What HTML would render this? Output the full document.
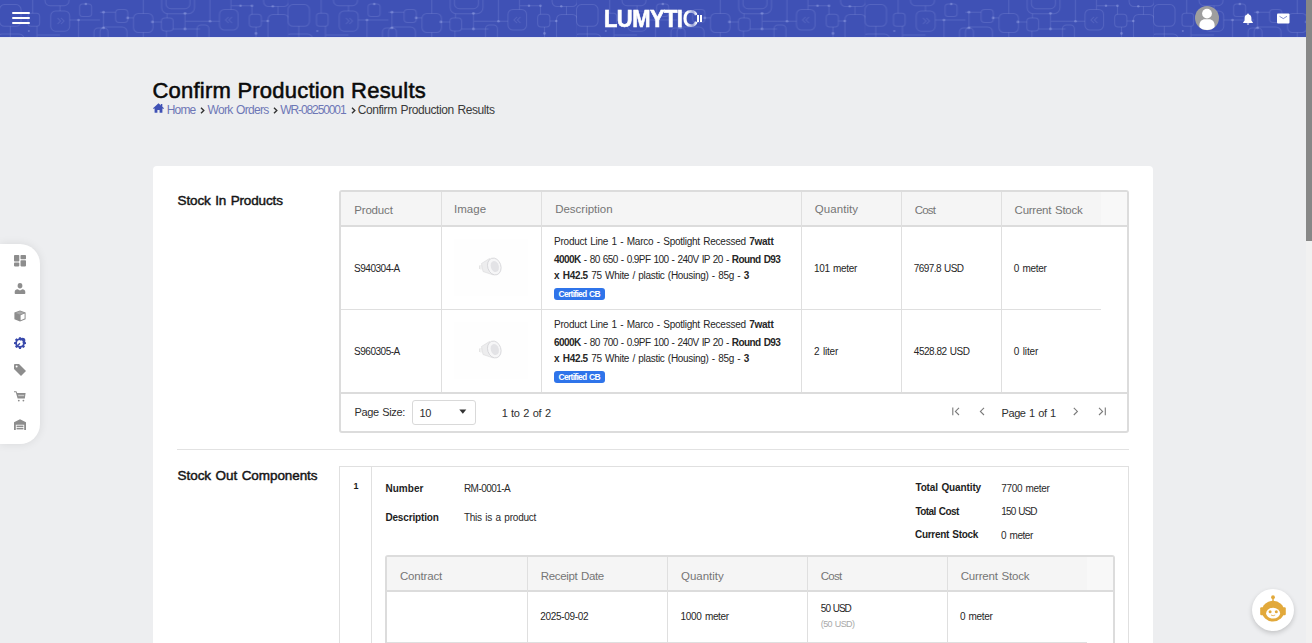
<!DOCTYPE html>
<html><head><meta charset="utf-8">
<style>
*{box-sizing:border-box;margin:0;padding:0}
html,body{width:1312px;height:643px;overflow:hidden}
body{background:#edeef0;font-family:"Liberation Sans",sans-serif;position:relative;color:#222}
.a{position:absolute;white-space:nowrap;line-height:1}
#hdr{position:absolute;left:0;top:0;width:1306px;height:37px;background:#3f51b5;overflow:hidden}
#hdrline{position:absolute;left:0;top:37px;width:1306px;height:1px;background:#e4e7f3}
#sb{position:absolute;left:1306px;top:0;width:6px;height:643px;background:#f1f1f1}
#sbt{position:absolute;left:1306px;top:0;width:6px;height:241px;background:#878787}
#side{position:absolute;left:0;top:244px;width:40px;height:200px;background:#fff;border-radius:0 20px 20px 0;box-shadow:0 0 10px rgba(0,0,0,.09)}
#card{position:absolute;left:153px;top:166px;width:1000px;height:500px;background:#fff;border-radius:4px}
.tbl{position:absolute;border:2px solid #dcdcdc;border-radius:3px;background:#fff}
.vl{position:absolute;width:1px;background:#dfdfdf}
.hl{position:absolute;height:1px;background:#dfdfdf}
.hd{color:#6e6e6e;font-size:12px}
.cell{color:#222;font-size:10px}
.bd{font-weight:bold}
.badge{position:absolute;background:#2f74ea;border-radius:3px;color:#fff;font-weight:bold;font-size:8.5px;line-height:12px;height:12px;padding:0 3px}
</style></head><body>
<div id="hdr"><svg width="1306" height="37" style="position:absolute;left:0;top:0">
<defs><pattern id="pt" patternUnits="userSpaceOnUse" width="288.5" height="37">
<g fill="none" stroke="rgba(200,210,255,0.15)" stroke-width="1">
<rect x="-0.5" y="4.6" width="21.5" height="21.7" rx="5"/>
<rect x="288" y="4.6" width="21.5" height="21.7" rx="5"/>
<rect x="28" y="13.3" width="11.6" height="13" rx="3"/>
<path d="M32.7 0V13.3"/>
<rect x="50.7" y="11" width="19" height="20.2" rx="5"/>
<rect x="45" y="-10" width="24" height="15.7" rx="5"/>
<rect x="79.6" y="4" width="12" height="12.5" rx="3"/>
<path d="M69.7 20H100M78.5 20V37M10.3 26.3V37M37 26.3V37M37 35H60M60 5.7V11"/>
<rect x="-3" y="34" width="27" height="10" rx="5"/>
<rect x="94" y="28" width="14" height="14" rx="4"/>
<path d="M100 12.2H115.6M103.5 12.2V27.9"/>
<rect x="115.6" y="9.5" width="12.2" height="13" rx="3.5"/>
<path d="M127.7 17.9H133.5"/>
<rect x="133.5" y="13.5" width="19.5" height="19.1" rx="5"/>
<path d="M143.3 0V13.5M143.3 32.6V37M153 21.9H161.4"/>
<rect x="161.4" y="17.9" width="11.8" height="13" rx="3.5"/>
<rect x="161.7" y="-12" width="32.8" height="25.7" rx="6"/>
<rect x="166" y="-12" width="24" height="20.7" rx="5"/>
<path d="M185 13.3V29M173 29H200M185 21.3H200M167 13.7V17.9M166.5 31V37"/>
<rect x="100" y="27" width="27" height="14" rx="5"/>
<rect x="197" y="25" width="12" height="16" rx="4"/>
<path d="M210 0V21.3M200 21.3H219.5"/>
<rect x="219.5" y="9.5" width="18.6" height="20.5" rx="5"/>
<path d="M231 0V9.5M231 5.8H252M252 5.8V14.3"/>
<rect x="249.2" y="14.3" width="12.2" height="12.7" rx="3.5"/>
<path d="M261.4 21H268"/>
<rect x="268" y="14.5" width="20.8" height="26" rx="5"/>
<rect x="263.6" y="-12" width="25.2" height="18.5" rx="5"/>
<path d="M256 27V37M278 6.5V14.5"/>
<path d="M57.5 18L60.5 21L57.5 24M61 18L64 21L61 24"/>
<path d="M232 17L229 20L232 23M228.5 17L225.5 20L228.5 23"/>
</g>
<g fill="rgba(200,210,255,0.3)">
<circle cx="85.8" cy="4" r="1.3"/><circle cx="78.5" cy="20" r="1.3"/><circle cx="28.8" cy="31" r="1"/>
<circle cx="103.5" cy="12.2" r="1.4"/><circle cx="103.5" cy="27.9" r="1.4"/><circle cx="127.7" cy="17.9" r="1.4"/>
<circle cx="152.4" cy="21.9" r="1.4"/><circle cx="185" cy="13.3" r="1.4"/><circle cx="185" cy="29" r="1.4"/>
<circle cx="210" cy="21.3" r="1.3"/><circle cx="240.5" cy="5.8" r="1.2"/><circle cx="252" cy="5.8" r="1.3"/>
<circle cx="267.8" cy="21" r="1.3"/><circle cx="272.8" cy="6.2" r="1.2"/><circle cx="256" cy="33.4" r="1.3"/>
</g>
</pattern></defs>
<rect width="1306" height="37" fill="url(#pt)"/>
</svg>
<div style="position:absolute;left:12px;top:11.6px;width:18px;height:2.3px;background:#fff;border-radius:1px"></div>
<div style="position:absolute;left:12px;top:16.9px;width:18px;height:2.3px;background:#fff;border-radius:1px"></div>
<div style="position:absolute;left:12px;top:22px;width:18px;height:2.3px;background:#fff;border-radius:1px"></div>
<div class="a" style="left:604px;top:8px;font-size:23.5px;font-weight:bold;color:#fff;letter-spacing:-0.6px;-webkit-text-stroke:0.6px #fff;transform-origin:0 0;transform:scaleX(0.935)">LUMYTI<span style="background:linear-gradient(90deg,#fff 30%,rgba(255,255,255,0.45) 70%,#fff 95%);-webkit-background-clip:text;color:transparent;-webkit-text-stroke:0">C</span></div>
<div style="position:absolute;left:697px;top:15px;width:1.5px;height:7px;background:#fff"></div><div style="position:absolute;left:700px;top:15px;width:1.5px;height:7px;background:#fff"></div>
<svg width="30" height="30" style="position:absolute;left:1192px;top:3px" viewBox="0 0 30 30">
<circle cx="15" cy="15" r="12" fill="#9e9e9e"/>
<circle cx="15" cy="10.6" r="4.9" fill="#fff"/>
<clipPath id="avc"><circle cx="15" cy="15" r="12"/></clipPath><path clip-path="url(#avc)" d="M7.4 30V22.5C7.4 18.5 10 16.3 13 16.3H17C20 16.3 22.6 18.5 22.6 22.5V30Z" fill="#fff"/>
</svg>
<svg width="12" height="12" style="position:absolute;left:1242px;top:12.5px" viewBox="0 0 12 12">
<path d="M6 0.6C6.6 0.6 6.9 1 6.9 1.4C8.6 1.8 9.4 3.2 9.4 5V7.6L10.8 9.3V10H1.2V9.3L2.6 7.6V5C2.6 3.2 3.4 1.8 5.1 1.4C5.1 1 5.4 0.6 6 0.6ZM4.8 10.6H7.2C7.2 11.3 6.7 11.7 6 11.7S4.8 11.3 4.8 10.6Z" fill="#fff"/>
</svg>
<svg width="13" height="11" style="position:absolute;left:1277px;top:12.5px" viewBox="0 0 13 11">
<rect x="0" y="0.5" width="12.5" height="10" rx="1" fill="#fff"/>
<path d="M2.5 3.3L6.25 5.6L10 3.3" fill="none" stroke="#3f51b5" stroke-width="0.8" opacity="0.8"/>
</svg>
</div>
<div id="hdrline"></div>

<div id="side">
<svg style="position:absolute;left:14px;top:11px" width="12" height="12" viewBox="0 0 12 12"><g fill="#8d8d8d"><rect x="0" y="0" width="5.3" height="6.6" rx="0.8"/><rect x="6.5" y="0" width="5.5" height="4.3" rx="0.8"/><rect x="0" y="7.6" width="5.3" height="3.8" rx="0.8"/><rect x="6.5" y="5.3" width="5.5" height="6.1" rx="0.8"/></g></svg>
<svg style="position:absolute;left:14px;top:39px" width="12" height="12" viewBox="0 0 12 12"><g fill="#8d8d8d"><path d="M3.7 2.3C3.7 0.9 4.7 0 6 0S8.3 0.9 8.3 2.3V3.2C8.3 4.6 7.3 5.4 6 5.4S3.7 4.6 3.7 3.2Z"/><path d="M0.7 9C0.7 7.4 2 6.3 3.6 6.3L6 7.6L8.4 6.3C10 6.3 11.3 7.4 11.3 9V10.2C11.3 10.6 11 11 10.6 11H1.4C1 11 0.7 10.6 0.7 10.2Z"/></g></svg>
<svg style="position:absolute;left:14px;top:66px" width="12" height="12" viewBox="0 0 12 12"><path d="M6 0.4L11.6 2.6V9.2L6 11.6L0.4 9.2V2.6Z" fill="#8d8d8d"/><path d="M6.6 5.2L10.6 3.6V8.6L6.6 10.3Z" fill="#fff"/><path d="M1.6 2.9L6 1.3L10.4 2.9L6 4.5Z" fill="#a9a9a9"/></svg>
<svg style="position:absolute;left:13.5px;top:93px" width="12" height="12" viewBox="0 0 12 12"><path d="M5 0.2H7L7.3 1.6L8.4 2.1L9.6 1.3L11 2.7L10.2 3.9L10.6 5L12 5.3V7L10.6 7.3L10.2 8.4L11 9.6L9.6 11L8.4 10.2L7.3 10.6L7 12H5L4.7 10.6L3.6 10.2L2.4 11L1 9.6L1.8 8.4L1.4 7.3L0 7V5.3L1.4 5L1.8 3.9L1 2.7L2.4 1.3L3.6 2.1L4.7 1.6Z" fill="#3949ab"/><circle cx="6" cy="6.1" r="3" fill="#fff"/><path d="M3.5 8.8L6 6.3M6.5 3.6A2.1 2.1 0 1 1 8.6 5.7" stroke="#3949ab" stroke-width="1.3" fill="none"/></svg>
<svg style="position:absolute;left:14px;top:120px" width="12" height="12" viewBox="0 0 12 12"><path d="M0 1.2C0 0.5 0.5 0 1.2 0H5L12 7L7 12L0 5Z" fill="#8d8d8d"/><circle cx="2.6" cy="2.6" r="1" fill="#fff"/></svg>
<svg style="position:absolute;left:14px;top:147px" width="12" height="11" viewBox="0 0 12 11"><g fill="#8d8d8d"><path d="M0 0.3H2.4L3.2 2H11.6L10.8 7.6H3.6L1.8 1.3H0Z"/><circle cx="4.8" cy="9.6" r="0.9"/><circle cx="9.4" cy="9.6" r="0.9"/></g><rect x="4.2" y="3.8" width="6" height="1.4" fill="#c8c8c8"/></svg>
<svg style="position:absolute;left:14px;top:175px" width="12" height="12" viewBox="0 0 12 12"><path d="M0 3.3L6 0.2L12 3.3V11H10.2V5.8H1.8V11H0Z" fill="#8d8d8d"/><rect x="2.6" y="6.6" width="6.8" height="1.5" fill="#8d8d8d"/><rect x="2.6" y="8.9" width="6.8" height="1.5" fill="#8d8d8d"/></svg>
</div>

<!-- breadcrumb icons -->
<svg style="position:absolute;left:153px;top:103px" width="11" height="10" viewBox="0 0 11 10"><path d="M5.5 0.3L11 5.2L10.2 6L9.4 5.3V9.8H6.6V7H4.4V9.8H1.6V5.3L0.8 6L0 5.2Z" fill="#3f51b5"/><rect x="7.8" y="1" width="1.5" height="2.8" fill="#3f51b5"/></svg>
<svg style="position:absolute;left:200px;top:106.5px" width="5" height="7" viewBox="0 0 5 7"><path d="M1 0.8L3.8 3.5L1 6.2" stroke="#333" stroke-width="1.4" fill="none"/></svg>
<svg style="position:absolute;left:272.6px;top:106.5px" width="5" height="7" viewBox="0 0 5 7"><path d="M1 0.8L3.8 3.5L1 6.2" stroke="#333" stroke-width="1.4" fill="none"/></svg>
<svg style="position:absolute;left:350.5px;top:106.5px" width="5" height="7" viewBox="0 0 5 7"><path d="M1 0.8L3.8 3.5L1 6.2" stroke="#333" stroke-width="1.4" fill="none"/></svg>


<!-- title -->
<div class="a" style="left:152.5px;top:79.5px;font-size:22px;letter-spacing:0.22px;-webkit-text-stroke:0.55px #0b0b0b;color:#0b0b0b">Confirm Production Results</div>

<div id="card"></div>
<!-- stock in table -->
<div style="position:absolute;left:339px;top:190px;width:790px;height:243px;border:2px solid #dcdcdc;border-radius:3px;background:#fff"></div>
<div style="position:absolute;left:341px;top:192px;width:760px;height:33px;background:#f5f5f5"></div>
<div style="position:absolute;left:1101px;top:192px;width:26px;height:33px;background:#f8f8f8"></div>
<div style="position:absolute;left:341px;top:225px;width:786px;height:2px;background:#dcdcdc"></div>
<div style="position:absolute;left:341px;top:392px;width:786px;height:2px;background:#dcdcdc"></div>
<div class="hl" style="left:341px;top:309px;width:760px"></div>
<div class="vl" style="left:441px;top:192px;height:200px"></div>
<div class="vl" style="left:541px;top:192px;height:200px"></div>
<div class="vl" style="left:801px;top:192px;height:200px"></div>
<div class="vl" style="left:901px;top:192px;height:200px"></div>
<div class="vl" style="left:1001px;top:192px;height:200px"></div>
<div class="badge" style="left:554px;top:288px;width:51px"></div>
<div class="badge" style="left:554px;top:371px;width:51px"></div>
<div style="position:absolute;left:412px;top:400px;width:64px;height:25px;border:1px solid #d9d9d9;border-radius:3px;background:#fff"></div>
<svg style="position:absolute;left:458.5px;top:408.5px" width="8" height="6" viewBox="0 0 8 6"><path d="M0.3 0.5H7.3L3.8 4.8Z" fill="#333"/></svg>
<svg style="position:absolute;left:951px;top:407px" width="10" height="9" viewBox="0 0 10 9"><path d="M1.8 0.5V8.3M8 0.8L4.4 4.4L8 8" stroke="#7a7a7a" stroke-width="1.1" fill="none"/></svg>
<svg style="position:absolute;left:978px;top:407px" width="8" height="9" viewBox="0 0 8 9"><path d="M6 0.8L2.4 4.4L6 8" stroke="#7a7a7a" stroke-width="1.1" fill="none"/></svg>
<svg style="position:absolute;left:1072px;top:407px" width="8" height="9" viewBox="0 0 8 9"><path d="M1.8 0.8L5.4 4.4L1.8 8" stroke="#7a7a7a" stroke-width="1.1" fill="none"/></svg>
<svg style="position:absolute;left:1097px;top:407px" width="10" height="9" viewBox="0 0 10 9"><path d="M2 0.8L5.6 4.4L2 8M8.3 0.5V8.3" stroke="#7a7a7a" stroke-width="1.1" fill="none"/></svg>
<!-- product images -->
<div style="position:absolute;left:454px;top:239px;width:74px;height:57px;background:#fefefe"></div>
<div style="position:absolute;left:454px;top:322px;width:74px;height:57px;background:#fefefe"></div>
<svg style="position:absolute;left:478px;top:256px" width="26" height="22" viewBox="0 0 26 22"><path d="M3.5 7.5L11.5 2.5L15.5 19L5 15.5Z" fill="#ededee" stroke="#dcdcde" stroke-width="0.7"/><ellipse cx="16.3" cy="10.5" rx="6.6" ry="8.6" fill="#f6f6f7" stroke="#d4d4d7" stroke-width="0.8" transform="rotate(-18 16.3 10.5)"/><ellipse cx="16.8" cy="10.5" rx="4" ry="5.6" fill="#e3e3e6" transform="rotate(-18 16.8 10.5)"/><path d="M1.5 9.5V13M3 9V13.5" stroke="#d8d8d8" stroke-width="0.7"/></svg>
<svg style="position:absolute;left:478px;top:339px" width="26" height="22" viewBox="0 0 26 22"><path d="M3.5 7.5L11.5 2.5L15.5 19L5 15.5Z" fill="#ededee" stroke="#dcdcde" stroke-width="0.7"/><ellipse cx="16.3" cy="10.5" rx="6.6" ry="8.6" fill="#f6f6f7" stroke="#d4d4d7" stroke-width="0.8" transform="rotate(-18 16.3 10.5)"/><ellipse cx="16.8" cy="10.5" rx="4" ry="5.6" fill="#e3e3e6" transform="rotate(-18 16.8 10.5)"/><path d="M1.5 9.5V13M3 9V13.5" stroke="#d8d8d8" stroke-width="0.7"/></svg>
<!-- hr -->
<div style="position:absolute;left:177px;top:449px;width:952px;height:1px;background:#e2e2e2"></div>
<!-- component box -->
<div style="position:absolute;left:339px;top:466px;width:790px;height:200px;border:1px solid #e0e0e0;background:#fff"></div>
<div class="vl" style="left:371px;top:467px;height:180px;background:#e0e0e0"></div>
<div style="position:absolute;left:385px;top:555px;width:730px;height:100px;border:2px solid #dcdcdc;border-radius:3px;background:#fff"></div>
<div style="position:absolute;left:387px;top:557px;width:700px;height:33px;background:#f5f5f5"></div>
<div style="position:absolute;left:1087px;top:557px;width:26px;height:33px;background:#f8f8f8"></div>
<div style="position:absolute;left:387px;top:590px;width:726px;height:2px;background:#dcdcdc"></div>
<div class="hl" style="left:387px;top:642px;width:700px"></div>
<div class="vl" style="left:527px;top:557px;height:90px"></div>
<div class="vl" style="left:667px;top:557px;height:90px"></div>
<div class="vl" style="left:807px;top:557px;height:90px"></div>
<div class="vl" style="left:947px;top:557px;height:90px"></div>
<!--TXT-->
<div class="a" style="left:166.70px;top:103.74px;font-size:12px;letter-spacing:-0.812px;word-spacing:0.0px;color:#6d77b6;">Home</div>
<div class="a" style="left:207.60px;top:103.74px;font-size:12px;letter-spacing:-0.699px;word-spacing:0.9px;color:#6d77b6;">Work Orders</div>
<div class="a" style="left:280.30px;top:103.74px;font-size:12px;letter-spacing:-1.111px;word-spacing:0.0px;color:#6d77b6;">WR-08250001</div>
<div class="a" style="left:357.70px;top:103.74px;font-size:12px;letter-spacing:-0.422px;word-spacing:0.9px;color:#3a3a3a;">Confirm Production Results</div>
<div class="a" style="left:177.60px;top:194.37px;font-size:13.5px;letter-spacing:-0.141px;word-spacing:0.9px;color:#151515;-webkit-text-stroke:0.45px #151515">Stock In Products</div>
<div class="a" style="left:177.60px;top:469.47px;font-size:13.5px;letter-spacing:-0.075px;word-spacing:0.9px;color:#151515;-webkit-text-stroke:0.45px #151515">Stock Out Components</div>
<div class="a" style="left:354.20px;top:205.07px;font-size:11.5px;letter-spacing:-0.156px;word-spacing:0.0px;color:#757575;">Product</div>
<div class="a" style="left:453.90px;top:204.07px;font-size:11.5px;letter-spacing:0.083px;word-spacing:0.0px;color:#757575;">Image</div>
<div class="a" style="left:555.20px;top:204.07px;font-size:11.5px;letter-spacing:-0.013px;word-spacing:0.0px;color:#757575;">Description</div>
<div class="a" style="left:814.80px;top:204.07px;font-size:11.5px;letter-spacing:0.060px;word-spacing:0.0px;color:#757575;">Quantity</div>
<div class="a" style="left:914.80px;top:205.07px;font-size:11.5px;letter-spacing:-0.817px;word-spacing:0.0px;color:#757575;">Cost</div>
<div class="a" style="left:1014.60px;top:205.07px;font-size:11.5px;letter-spacing:-0.254px;word-spacing:0.9px;color:#757575;">Current Stock</div>
<div class="a" style="left:354.10px;top:263.54px;font-size:10px;letter-spacing:-0.484px;word-spacing:0.0px;color:#262626;">S940304-A</div>
<div class="a" style="left:814.00px;top:263.54px;font-size:10px;letter-spacing:-0.324px;word-spacing:0.9px;color:#262626;">101 meter</div>
<div class="a" style="left:913.80px;top:263.54px;font-size:10px;letter-spacing:-0.573px;word-spacing:0.9px;color:#262626;">7697.8 USD</div>
<div class="a" style="left:1013.80px;top:263.54px;font-size:10px;letter-spacing:-0.295px;word-spacing:0.9px;color:#262626;">0 meter</div>
<div class="a" style="left:554.10px;top:237.13px;font-size:10px;letter-spacing:-0.252px;word-spacing:0.9px;color:#262626;">Product Line 1 - Marco - Spotlight Recessed <b>7watt</b></div>
<div class="a" style="left:554.10px;top:255.34px;font-size:10px;letter-spacing:-0.575px;word-spacing:0.9px;color:#262626;"><b>4000K</b> - 80 650 - 0.9PF 100 - 240V IP 20 - <b>Round D93</b></div>
<div class="a" style="left:554.10px;top:271.04px;font-size:10px;letter-spacing:-0.310px;word-spacing:0.9px;color:#262626;"><b>x H42.5</b> 75 White / plastic (Housing) - 85g - <b>3</b></div>
<div class="a" style="left:558.50px;top:290.10px;font-size:8.5px;letter-spacing:-0.716px;word-spacing:0.9px;color:#ffffff;"><b>Certified CB</b></div>
<div class="a" style="left:354.10px;top:346.54px;font-size:10px;letter-spacing:-0.484px;word-spacing:0.0px;color:#262626;">S960305-A</div>
<div class="a" style="left:814.00px;top:346.54px;font-size:10px;letter-spacing:-0.171px;word-spacing:0.9px;color:#262626;">2 liter</div>
<div class="a" style="left:913.80px;top:346.54px;font-size:10px;letter-spacing:-0.472px;word-spacing:0.9px;color:#262626;">4528.82 USD</div>
<div class="a" style="left:1013.80px;top:346.54px;font-size:10px;letter-spacing:-0.137px;word-spacing:0.9px;color:#262626;">0 liter</div>
<div class="a" style="left:554.10px;top:320.14px;font-size:10px;letter-spacing:-0.252px;word-spacing:0.9px;color:#262626;">Product Line 1 - Marco - Spotlight Recessed <b>7watt</b></div>
<div class="a" style="left:554.10px;top:338.34px;font-size:10px;letter-spacing:-0.575px;word-spacing:0.9px;color:#262626;"><b>6000K</b> - 80 700 - 0.9PF 100 - 240V IP 20 - <b>Round D93</b></div>
<div class="a" style="left:554.10px;top:354.04px;font-size:10px;letter-spacing:-0.310px;word-spacing:0.9px;color:#262626;"><b>x H42.5</b> 75 White / plastic (Housing) - 85g - <b>3</b></div>
<div class="a" style="left:558.50px;top:373.10px;font-size:8.5px;letter-spacing:-0.716px;word-spacing:0.9px;color:#ffffff;"><b>Certified CB</b></div>
<div class="a" style="left:354.50px;top:407.39px;font-size:11px;letter-spacing:-0.372px;word-spacing:0.9px;color:#2e2e2e;">Page Size:</div>
<div class="a" style="left:419.60px;top:407.59px;font-size:11px;letter-spacing:-0.418px;word-spacing:0.0px;color:#2e2e2e;">10</div>
<div class="a" style="left:501.70px;top:407.89px;font-size:11px;letter-spacing:-0.321px;word-spacing:0.9px;color:#2e2e2e;">1 to 2 of 2</div>
<div class="a" style="left:1001.60px;top:407.89px;font-size:11px;letter-spacing:-0.435px;word-spacing:0.9px;color:#2e2e2e;">Page 1 of 1</div>
<div class="a" style="left:353.40px;top:482.28px;font-size:9px;letter-spacing:-0.400px;word-spacing:0.0px;color:#1a1a1a;"><b>1</b></div>
<div class="a" style="left:385.40px;top:484.34px;font-size:10px;letter-spacing:0.042px;word-spacing:0.0px;color:#1e1e1e;"><b>Number</b></div>
<div class="a" style="left:463.90px;top:484.34px;font-size:10px;letter-spacing:-0.532px;word-spacing:0.0px;color:#2a2a2a;">RM-0001-A</div>
<div class="a" style="left:385.40px;top:512.53px;font-size:10px;letter-spacing:-0.160px;word-spacing:0.0px;color:#1e1e1e;"><b>Description</b></div>
<div class="a" style="left:463.90px;top:512.53px;font-size:10px;letter-spacing:-0.224px;word-spacing:0.9px;color:#2a2a2a;">This is a product</div>
<div class="a" style="left:915.40px;top:483.34px;font-size:10px;letter-spacing:-0.124px;word-spacing:0.9px;color:#1e1e1e;"><b>Total Quantity</b></div>
<div class="a" style="left:1001.30px;top:484.34px;font-size:10px;letter-spacing:-0.340px;word-spacing:0.9px;color:#2a2a2a;">7700 meter</div>
<div class="a" style="left:915.40px;top:507.04px;font-size:10px;letter-spacing:-0.557px;word-spacing:0.9px;color:#1e1e1e;"><b>Total Cost</b></div>
<div class="a" style="left:1001.30px;top:507.04px;font-size:10px;letter-spacing:-0.876px;word-spacing:0.9px;color:#2a2a2a;">150 USD</div>
<div class="a" style="left:915.00px;top:530.24px;font-size:10px;letter-spacing:-0.305px;word-spacing:0.9px;color:#1e1e1e;"><b>Current Stock</b></div>
<div class="a" style="left:1001.10px;top:531.24px;font-size:10px;letter-spacing:-0.429px;word-spacing:0.9px;color:#2a2a2a;">0 meter</div>
<div class="a" style="left:400.00px;top:570.67px;font-size:11.5px;letter-spacing:-0.181px;word-spacing:0.0px;color:#757575;">Contract</div>
<div class="a" style="left:540.80px;top:570.67px;font-size:11.5px;letter-spacing:-0.362px;word-spacing:0.9px;color:#757575;">Receipt Date</div>
<div class="a" style="left:681.00px;top:570.67px;font-size:11.5px;letter-spacing:-0.025px;word-spacing:0.0px;color:#757575;">Quantity</div>
<div class="a" style="left:820.80px;top:570.67px;font-size:11.5px;letter-spacing:-0.750px;word-spacing:0.0px;color:#757575;">Cost</div>
<div class="a" style="left:960.70px;top:570.67px;font-size:11.5px;letter-spacing:-0.196px;word-spacing:0.9px;color:#757575;">Current Stock</div>
<div class="a" style="left:540.30px;top:611.63px;font-size:10px;letter-spacing:-0.310px;word-spacing:0.0px;color:#262626;">2025-09-02</div>
<div class="a" style="left:680.60px;top:611.63px;font-size:10px;letter-spacing:-0.328px;word-spacing:0.9px;color:#262626;">1000 meter</div>
<div class="a" style="left:820.80px;top:603.53px;font-size:10px;letter-spacing:-0.979px;word-spacing:0.9px;color:#262626;">50 USD</div>
<div class="a" style="left:820.80px;top:620.18px;font-size:9px;letter-spacing:-0.601px;word-spacing:0.9px;color:#a8a8a8;">(50 USD)</div>
<div class="a" style="left:960.10px;top:611.63px;font-size:10px;letter-spacing:-0.362px;word-spacing:0.9px;color:#262626;">0 meter</div>
<!--/TXT-->
<!-- robot -->
<div style="position:absolute;left:1252px;top:589px;width:42px;height:42px;border-radius:50%;background:#fff;box-shadow:0 2px 5px rgba(0,0,0,0.18)"></div>
<svg style="position:absolute;left:1256.3px;top:594.4px" width="34" height="34" viewBox="0 0 34 34"><g fill="#e2a93b"><circle cx="17" cy="3.2" r="1.9"/><rect x="16.3" y="3.5" width="1.4" height="5.5"/><ellipse cx="17" cy="17.2" rx="11" ry="10.4"/><rect x="4.2" y="13.2" width="3.4" height="8" rx="1.2"/><rect x="26.4" y="13.2" width="3.4" height="8" rx="1.2"/></g><ellipse cx="17.1" cy="19.2" rx="7" ry="5.4" fill="#fff"/><g fill="#e2a93b"><circle cx="14.1" cy="17.7" r="1.5"/><circle cx="20.3" cy="17.7" r="1.5"/></g><path d="M15 21Q17.1 22.5 19.2 21" stroke="#e2a93b" stroke-width="0.8" fill="none"/></svg>


<div id="sb"></div><div id="sbt"></div>
</body></html>
